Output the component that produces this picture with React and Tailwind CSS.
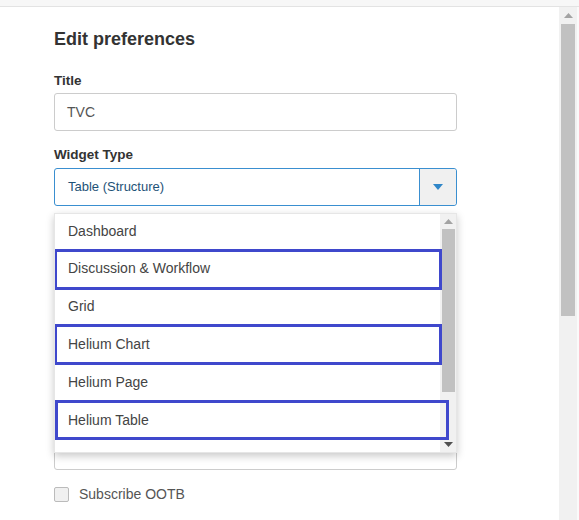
import React from "react";

const items = [
  { label: "Dashboard", h: "h-[35px]" },
  { label: "Discussion & Workflow", h: "h-[38px]" },
  { label: "Grid", h: "h-[38px]" },
  { label: "Helium Chart", h: "h-[38px]" },
  { label: "Helium Page", h: "h-[38px]" },
  { label: "Helium Table", h: "h-[38px]" },
];

function Dropdown() {
  return (
    <div className="absolute left-[54px] top-[213px] w-[403px] h-[240px] bg-white border border-[#e6e6e6] shadow-[0_3px_8px_rgba(0,0,0,0.22)] flex overflow-hidden">
      <div className="flex-1 flex flex-col overflow-hidden">
        {items.map((it) => (
          <div
            key={it.label}
            className={`${it.h} shrink-0 flex items-center pl-[13px] text-[14px] text-[#444]`}
          >
            {it.label}
          </div>
        ))}
      </div>
      <div className="w-[16px] bg-[#f1f1f1] flex flex-col items-center">
        <div className="h-[15px] flex items-center justify-center">
          <svg width="9" height="5" viewBox="0 0 9 5">
            <polygon points="0,5 9,5 4.5,0" fill="#a3a3a3" />
          </svg>
        </div>
        <div className="w-[13px] h-[163px] bg-[#c1c1c1]" />
        <div className="flex-1" />
        <div className="h-[16px] flex items-center justify-center">
          <svg width="9" height="5" viewBox="0 0 9 5">
            <polygon points="0,0 9,0 4.5,5" fill="#505050" />
          </svg>
        </div>
      </div>
      <div className="absolute left-[-1px] top-[35px] w-[388px] h-[41px] border-[3px] border-[#3f48cc]" />
      <div className="absolute left-[-1px] top-[110px] w-[388px] h-[41px] border-[3px] border-[#3f48cc]" />
      <div className="absolute left-[0px] top-[186px] w-[394px] h-[40px] border-[3px] border-[#3f48cc]" />
    </div>
  );
}

export default function App() {
  return (
    <div
      className="relative w-[579px] h-[520px] overflow-hidden bg-white flex flex-col"
      style={{ fontFamily: '"Liberation Sans", Arial, sans-serif' }}
    >
      <div className="h-[7px] shrink-0 bg-[#f7f7f7] border-b border-[#e3e3e3]" />
      <div className="flex-1 flex">
        <div className="flex-1 pl-[54px] pr-[102px] pt-[21px]">
          <h1 className="text-[18px] leading-[22px] font-bold text-[#333]">Edit preferences</h1>
          <div className="mt-[23px] text-[13.5px] leading-[16px] font-bold text-[#333]">Title</div>
          <div className="mt-[4px] h-[38px] border border-[#ccc] rounded-[3px] flex items-center pl-[12px] text-[14px] text-[#555]">
            TVC
          </div>
          <div className="mt-[16px] text-[13.5px] leading-[16px] font-bold text-[#333]">Widget Type</div>
          <div className="mt-[5px] h-[38px] border border-[#3a8fd0] rounded-[3px] flex">
            <div className="flex-1 flex items-center pl-[13px] text-[13px] text-[#1e5277]">
              Table (Structure)
            </div>
            <div className="w-[37px] bg-[#f0f0f0] border-l border-[#3a8fd0] rounded-r-[3px] flex items-center justify-center">
              <svg width="10" height="6" viewBox="0 0 10 6">
                <polygon points="0,0 10,0 5,6" fill="#2f86c8" />
              </svg>
            </div>
          </div>
          <div className="mt-[20px] h-[244px] border border-[#ccc] rounded-[3px]" />
          <div className="mt-[16px] flex items-center">
            <div className="w-[15px] h-[15px] border border-[#bbb] bg-[#f0f0f0] rounded-[2px]" />
            <span className="ml-[10px] text-[14px] leading-[16px] text-[#555]">Subscribe OOTB</span>
          </div>
        </div>
        <div className="w-[18px] bg-[#f1f1f1] flex flex-col items-center">
          <div className="h-[17px] flex items-center justify-center">
            <svg width="9" height="5" viewBox="0 0 9 5">
              <polygon points="0,5 9,5 4.5,0" fill="#a3a3a3" />
            </svg>
          </div>
          <div className="w-[14px] h-[292px] bg-[#c1c1c1]" />
        </div>
        <div className="w-[2px] bg-[#fafafa]" />
      </div>
      <Dropdown />
    </div>
  );
}
